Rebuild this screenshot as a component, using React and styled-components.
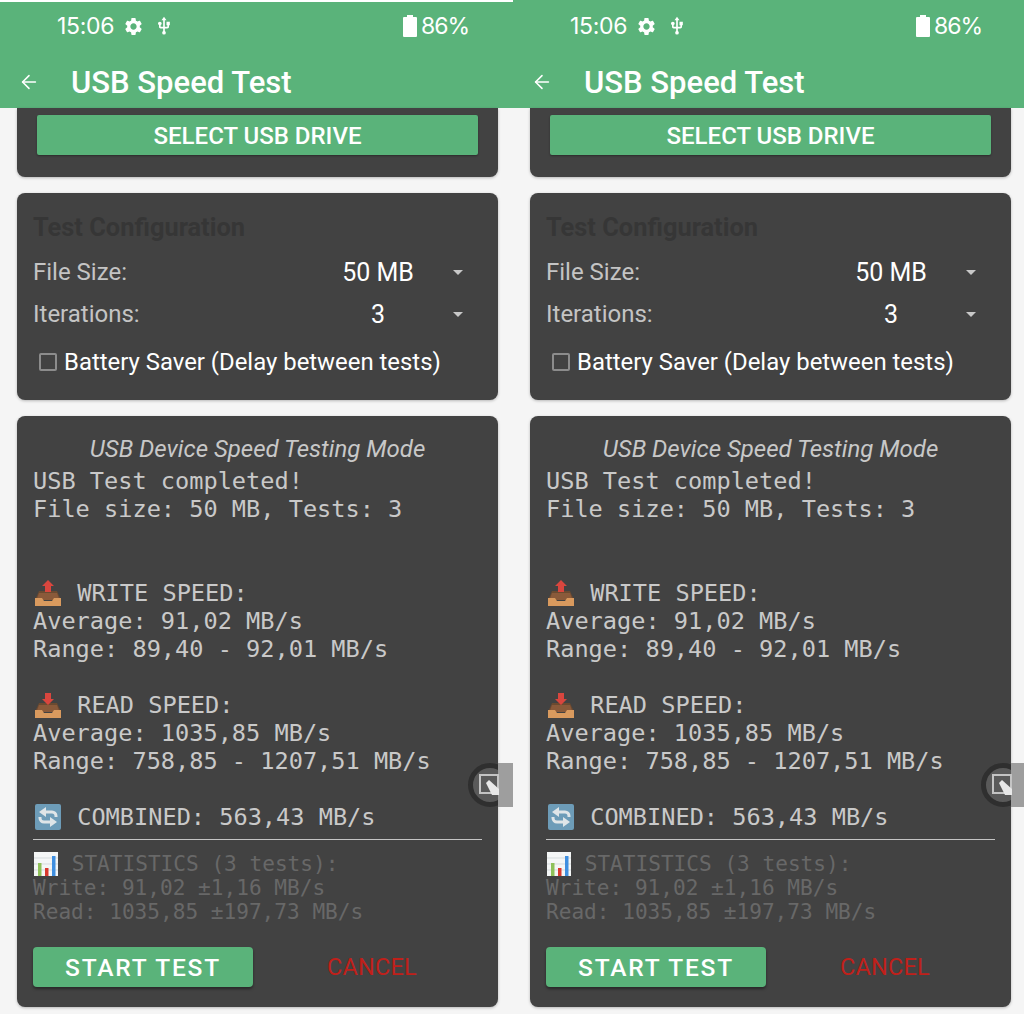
import React from 'react';
import styled, { createGlobalStyle } from 'styled-components';
import { ArrowLeft } from 'lucide-react';
import { MdSettings, MdUsb } from 'react-icons/md';

const GREEN = '#5ab37a';

const Global = createGlobalStyle`
  html, body {
    margin: 0;
    padding: 0;
    background: #fff;
    overflow: hidden;
  }
`;

const TrayIcon = ({ up }) => (
  <Emoji width={28} height={28} viewBox="0 0 28 28">
    <path d="M5 12h18l4 9H1z" fill="#6b4a30" />
    <path d="M5 14h18l2.5 7h-23z" fill="#8a5a3a" />
    <path d="M1 19h7l2 3h8l2-3h7v8H1z" fill="#d99a5e" />
    {up ? (
      <path d="M14 1l6 6h-3v6h-6V7H8z" fill="#d9463e" />
    ) : (
      <path d="M11 2h6v6h3l-6 6-6-6h3z" fill="#d9463e" />
    )}
  </Emoji>
);

const RepeatIcon = () => (
  <Emoji width={28} height={28} viewBox="0 0 28 28">
    <rect x="1" y="1" width="26" height="26" rx="2" fill="#6d9cb8" />
    <path d="M11 9h7a4 4 0 0 1 4 4v1" fill="none" stroke="#dfe5e8" strokeWidth="3" />
    <path d="M12 4v10l-7-5z" fill="#dfe5e8" />
    <path d="M17 19h-7a4 4 0 0 1-4-4v-1" fill="none" stroke="#dfe5e8" strokeWidth="3" />
    <path d="M16 14v10l7-5z" fill="#dfe5e8" />
  </Emoji>
);

const ChartIcon = () => (
  <Emoji width={24} height={24} viewBox="0 0 24 24">
    <rect width="24" height="24" fill="#f4f6f6" />
    <path d="M0 6h24M0 12h24M0 18h24" stroke="#d5dbdd" strokeWidth="1" />
    <rect x="4" y="11" width="3.5" height="13" fill="#8fc15a" />
    <rect x="11" y="16" width="3.5" height="8" fill="#d9392e" />
    <rect x="18" y="4" width="3.5" height="20" fill="#3f8fe0" />
  </Emoji>
);

const BatteryIcon = () => (
  <svg width="14" height="22" viewBox="0 0 14 22">
    <path d="M4 0h6v2h3a1 1 0 0 1 1 1v18a1 1 0 0 1-1 1H1a1 1 0 0 1-1-1V3a1 1 0 0 1 1-1h3z" fill="#fff" />
  </svg>
);

const Caret = () => (
  <svg width="10" height="5" viewBox="0 0 10 5">
    <path d="M0 0h10L5 5z" fill="#c8c8c8" />
  </svg>
);

const Phone = ({ topLine }) => (
  <Screen>
    <Header $topLine={topLine}>
      <StatusBar>
        <Clock>15:06</Clock>
        <MdSettings size={21} color="#fff" />
        <UsbSlot><MdUsb size={20} color="#fff" /></UsbSlot>
        <Battery>
          <BatteryIcon />
          <span>86%</span>
        </Battery>
      </StatusBar>
      <AppBar>
        <ArrowLeft size={22} color="#fff" strokeWidth={1.7} />
        <Title>USB Speed Test</Title>
      </AppBar>
    </Header>

    <Content>
      <DriveCard>
        <SelectButton>SELECT USB DRIVE</SelectButton>
      </DriveCard>

      <ConfigCard>
        <ConfigTitle>Test Configuration</ConfigTitle>
        <SelectRow>
          <Label>File Size:</Label>
          <Value>50 MB</Value>
          <Caret />
        </SelectRow>
        <SelectRow>
          <Label>Iterations:</Label>
          <Value>3</Value>
          <Caret />
        </SelectRow>
        <CheckRow>
          <CheckBox />
          <span>Battery Saver (Delay between tests)</span>
        </CheckRow>
      </ConfigCard>

      <ResultCard>
        <ModeText>USB Device Speed Testing Mode</ModeText>
        <Output>
          <Line>USB Test completed!</Line>
          <Line>File size: 50 MB, Tests: 3</Line>
          <Line />
          <Line />
          <Line><TrayIcon up /> WRITE SPEED:</Line>
          <Line>Average: 91,02 MB/s</Line>
          <Line>Range: 89,40 - 92,01 MB/s</Line>
          <Line />
          <Line><TrayIcon /> READ SPEED:</Line>
          <Line>Average: 1035,85 MB/s</Line>
          <Line>Range: 758,85 - 1207,51 MB/s</Line>
          <Line />
          <Line><RepeatIcon /> COMBINED: 563,43 MB/s</Line>
        </Output>
        <Divider />
        <Stats>
          <StatLine><ChartIcon /> STATISTICS (3 tests):</StatLine>
          <StatLine>Write: 91,02 ±1,16 MB/s</StatLine>
          <StatLine>Read: 1035,85 ±197,73 MB/s</StatLine>
        </Stats>
        <Actions>
          <StartButton>START TEST</StartButton>
          <CancelButton>CANCEL</CancelButton>
        </Actions>
      </ResultCard>
    </Content>

    <FloatingRing />
    <FloatingHandle />
    <FloatingIcon width="22" height="22" viewBox="0 0 22 22">
      <path d="M1 1h18v18H1z" fill="none" stroke="#c4c4c4" strokeWidth="2" />
      <path d="M7 9l3-3 10 9v6h-7z" fill="#e8e8e8" />
    </FloatingIcon>
  </Screen>
);

export default function App() {
  return (
    <Page>
      <Global />
      <Phone topLine />
      <Phone />
    </Page>
  );
}

const Page = styled.div`
  display: flex;
  width: 1024px;
  height: 1019px;
  overflow: hidden;
  background: #fff;
`;

const Screen = styled.div`
  position: relative;
  flex: 0 0 513px;
  width: 513px;
  height: 1014px;
  background: #f5f5f5;
  font-family: Roboto, sans-serif;
`;

const Header = styled.header`
  height: 108px;
  box-sizing: border-box;
  background: ${GREEN};
  border-top: ${props => (props.$topLine ? '2px solid #fff' : '0')};
  padding-top: ${props => (props.$topLine ? '0' : '2px')};
  color: #fff;
`;

const StatusBar = styled.div`
  display: flex;
  align-items: center;
  height: 48px;
  padding: 0 44px 0 57px;
`;

const Clock = styled.span`
  font-family: Inter, Roboto, sans-serif;
  font-size: 23px;
  letter-spacing: -0.3px;
  margin-right: 9px;
`;

const UsbSlot = styled.span`
  display: flex;
  margin-left: 10px;
`;

const Battery = styled.div`
  display: flex;
  align-items: center;
  gap: 4px;
  margin-left: auto;
  font-family: Inter, Roboto, sans-serif;
  font-size: 23px;
  letter-spacing: -1px;
`;

const AppBar = styled.div`
  display: flex;
  align-items: center;
  box-sizing: border-box;
  height: 58px;
  padding: 6px 0 0 18px;
`;

const Title = styled.h1`
  margin: 0 0 0 31px;
  font-size: 31px;
  font-weight: 500;
`;

const Content = styled.main`
  display: flex;
  flex-direction: column;
  gap: 16px;
  padding: 0 15px 0 17px;
`;

const Card = styled.section`
  background: #424242;
  border-radius: 0 0 8px 8px;
  box-shadow: 0 1px 3px rgba(0, 0, 0, 0.25);
`;

const DriveCard = styled(Card)`
  height: 69px;
  box-sizing: border-box;
  padding: 7px 20px 0;
`;

const SelectButton = styled.button`
  display: block;
  width: 100%;
  height: 40px;
  padding: 2px 0 0;
  border: 0;
  border-radius: 2px;
  background: ${GREEN};
  color: #fff;
  font-family: Roboto, sans-serif;
  font-size: 24px;
  font-weight: 500;
  box-shadow: 0 1px 2px rgba(0, 0, 0, 0.35);
`;

const ConfigCard = styled(Card)`
  height: 207px;
  box-sizing: border-box;
  border-radius: 8px;
  padding: 17px 16px 0;
`;

const ConfigTitle = styled.h2`
  margin: 0 0 7px;
  height: 34px;
  line-height: 34px;
  font-size: 25.4px;
  font-weight: 700;
  color: #363636;
`;

const SelectRow = styled.div`
  display: grid;
  grid-template-columns: 1fr 120px 48px;
  align-items: center;
  height: 42px;
  svg {
    justify-self: center;
  }
`;

const Label = styled.span`
  font-size: 24px;
  color: #c4c4c4;
`;

const Value = styled.span`
  font-size: 25px;
  color: #fff;
  text-align: center;
  padding-left: 8px;
`;

const CheckRow = styled.label`
  display: flex;
  align-items: center;
  gap: 7px;
  height: 42px;
  margin-top: 6px;
  padding-left: 6px;
  font-size: 23.9px;
  color: #fff;
`;

const CheckBox = styled.span`
  width: 14px;
  height: 14px;
  border: 2px solid #8c8c8c;
  border-radius: 2px;
`;

const ResultCard = styled(Card)`
  height: 591px;
  box-sizing: border-box;
  border-radius: 8px;
  padding: 16px 16px 0;
`;

const ModeText = styled.div`
  height: 34px;
  line-height: 34px;
  margin-bottom: 1px;
  text-align: center;
  font-size: 24px;
  font-style: italic;
  color: #c8c8c8;
`;

const Output = styled.div`
  font-family: 'DejaVu Sans Mono', monospace;
  font-size: 23.6px;
  color: #c9c9c9;
`;

const Line = styled.div`
  display: flex;
  align-items: center;
  height: 28px;
  line-height: 28px;
  white-space: pre;
`;

const Emoji = styled.svg`
  flex: none;
  margin: 0 1px;
`;

const Divider = styled.hr`
  height: 1px;
  margin: 8px 0 12px;
  border: 0;
  background: #c4c4c4;
`;

const Stats = styled.div`
  font-family: 'DejaVu Sans Mono', monospace;
  font-size: 21.1px;
  color: #686868;
`;

const StatLine = styled.div`
  display: flex;
  align-items: center;
  height: 24px;
  line-height: 24px;
  white-space: pre;
`;

const Actions = styled.div`
  display: flex;
  align-items: center;
  margin-top: 23px;
`;

const StartButton = styled.button`
  flex: none;
  width: 220px;
  height: 40px;
  padding: 0;
  border: 0;
  border-radius: 4px;
  background: ${GREEN};
  color: #fff;
  font-family: Roboto, sans-serif;
  font-size: 24.5px;
  font-weight: 500;
  letter-spacing: 1.8px;
  box-shadow: 0 2px 3px rgba(0, 0, 0, 0.4);
`;

const CancelButton = styled.button`
  flex: none;
  width: 238px;
  padding: 0;
  border: 0;
  background: none;
  color: #c0201a;
  font-family: Roboto, sans-serif;
  font-size: 23.5px;
  letter-spacing: 0.2px;
`;

const FloatingRing = styled.div`
  position: absolute;
  top: 763px;
  left: 468px;
  width: 44px;
  height: 44px;
  box-sizing: border-box;
  border-radius: 50%;
  border: 5px solid #2f2f2f;
  background: #5a5a5a;
`;

const FloatingHandle = styled.div`
  position: absolute;
  top: 763px;
  left: 498px;
  width: 15px;
  height: 44px;
  background: #9e9e9e;
`;

const FloatingIcon = styled.svg`
  position: absolute;
  top: 774px;
  left: 479px;
`;
